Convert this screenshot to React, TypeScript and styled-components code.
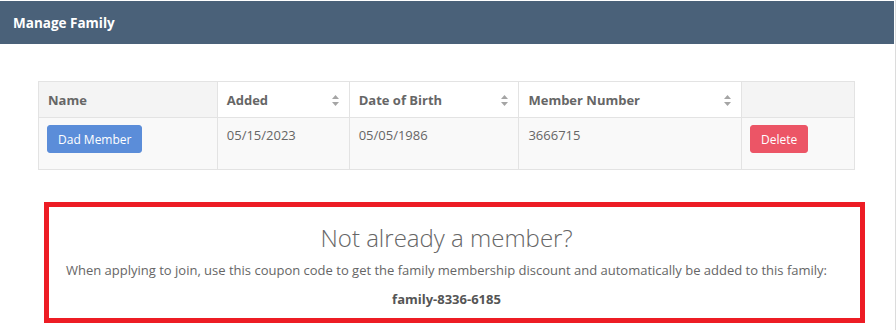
import React from "react";
import styled, { createGlobalStyle } from "styled-components";

const Global = createGlobalStyle`
  html, body { margin: 0; padding: 0; background: #fff; }
  body { font-family: "Open Sans", "Liberation Sans", sans-serif; color: #666; }
  * { box-sizing: border-box; }
`;

const Page = styled.div`
  width: 896px;
  height: 330px;
  border-right: 1px solid #dcdcdc;
  padding-top: 1px;
  overflow: hidden;
`;

const Header = styled.div`
  height: 43px;
  width: 894px;
  background: #4a6179;
  color: #fff;
  font-weight: 700;
  font-size: 13.5px;
  display: flex;
  align-items: center;
  padding-left: 13px;
`;

const Body = styled.div`
  padding: 37px 0 0 38px;
`;

const Table = styled.table`
  width: 817px;
  border-collapse: collapse;
  font-size: 13px;
  border: 1px solid #e3e3e3;
`;

const Th = styled.th<{ $w: number; $shade?: boolean }>`
  width: ${(p) => p.$w}px;
  height: 36px;
  text-align: left;
  font-weight: 700;
  color: #666;
  background: ${(p) => (p.$shade ? "#f4f4f4" : "#fff")};
  border: 1px solid #e3e3e3;
  padding: 0 9px;
  position: relative;
`;

const Td = styled.td`
  background: #f9f9f9;
  border: 1px solid #e3e3e3;
  height: 52px;
  padding: 8px 9px;
  vertical-align: top;
  color: #666;
  line-height: 18px;
`;

const SortIcon = styled.svg`
  position: absolute;
  right: 10px;
  top: 50%;
  margin-top: -5px;
`;

const Btn = styled.button<{ $color: string }>`
  font-family: inherit;
  font-size: 12px;
  color: #fff;
  background: ${(p) => p.$color};
  border: 1px solid ${(p) => p.$color};
  border-radius: 3px;
  height: 28px;
  padding: 0 10px;
  margin-top: -1px;
  margin-left: -1px;
  cursor: pointer;
  display: block;
`;

const Notice = styled.div`
  margin: 32px 0 0 6px;
  width: 821px;
  height: 121px;
  border: 5px solid #ed1c24;
  text-align: center;
  padding: 15px 16px 0 0;
`;

const Title = styled.div`
  font-size: 24px;
  font-weight: 300;
  color: #666;
  line-height: 32px;
`;

const Text = styled.div`
  font-size: 13px;
  color: #666;
  margin-top: 7px;
  line-height: 18px;
`;

const Code = styled.div`
  font-size: 13px;
  font-weight: 700;
  color: #555;
  margin-top: 11px;
  line-height: 18px;
`;

const Sort = () => (
  <SortIcon width="7" height="11" viewBox="0 0 7 11">
    <path d="M3.5 0 L7 4 L0 4 Z" fill="#a5a5a5" />
    <path d="M3.5 11 L7 7 L0 7 Z" fill="#a5a5a5" />
  </SortIcon>
);

export default function App() {
  return (
    <>
      <Global />
      <Page>
        <Header>Manage Family</Header>
        <Body>
          <Table>
            <thead>
              <tr>
                <Th $w={179} $shade>Name</Th>
                <Th $w={132}>
                  Added
                  <Sort />
                </Th>
                <Th $w={170}>
                  Date of Birth
                  <Sort />
                </Th>
                <Th $w={223}>
                  Member Number
                  <Sort />
                </Th>
                <Th $w={113} $shade></Th>
              </tr>
            </thead>
            <tbody>
              <tr>
                <Td>
                  <Btn $color="#5b8dd9">Dad Member</Btn>
                </Td>
                <Td>05/15/2023</Td>
                <Td>05/05/1986</Td>
                <Td>3666715</Td>
                <Td>
                  <Btn $color="#ec5566">Delete</Btn>
                </Td>
              </tr>
            </tbody>
          </Table>
          <Notice>
            <Title>Not already a member?</Title>
            <Text>
              When applying to join, use this coupon code to get the family membership discount and
              automatically be added to this family:
            </Text>
            <Code>family-8336-6185</Code>
          </Notice>
        </Body>
      </Page>
    </>
  );
}
